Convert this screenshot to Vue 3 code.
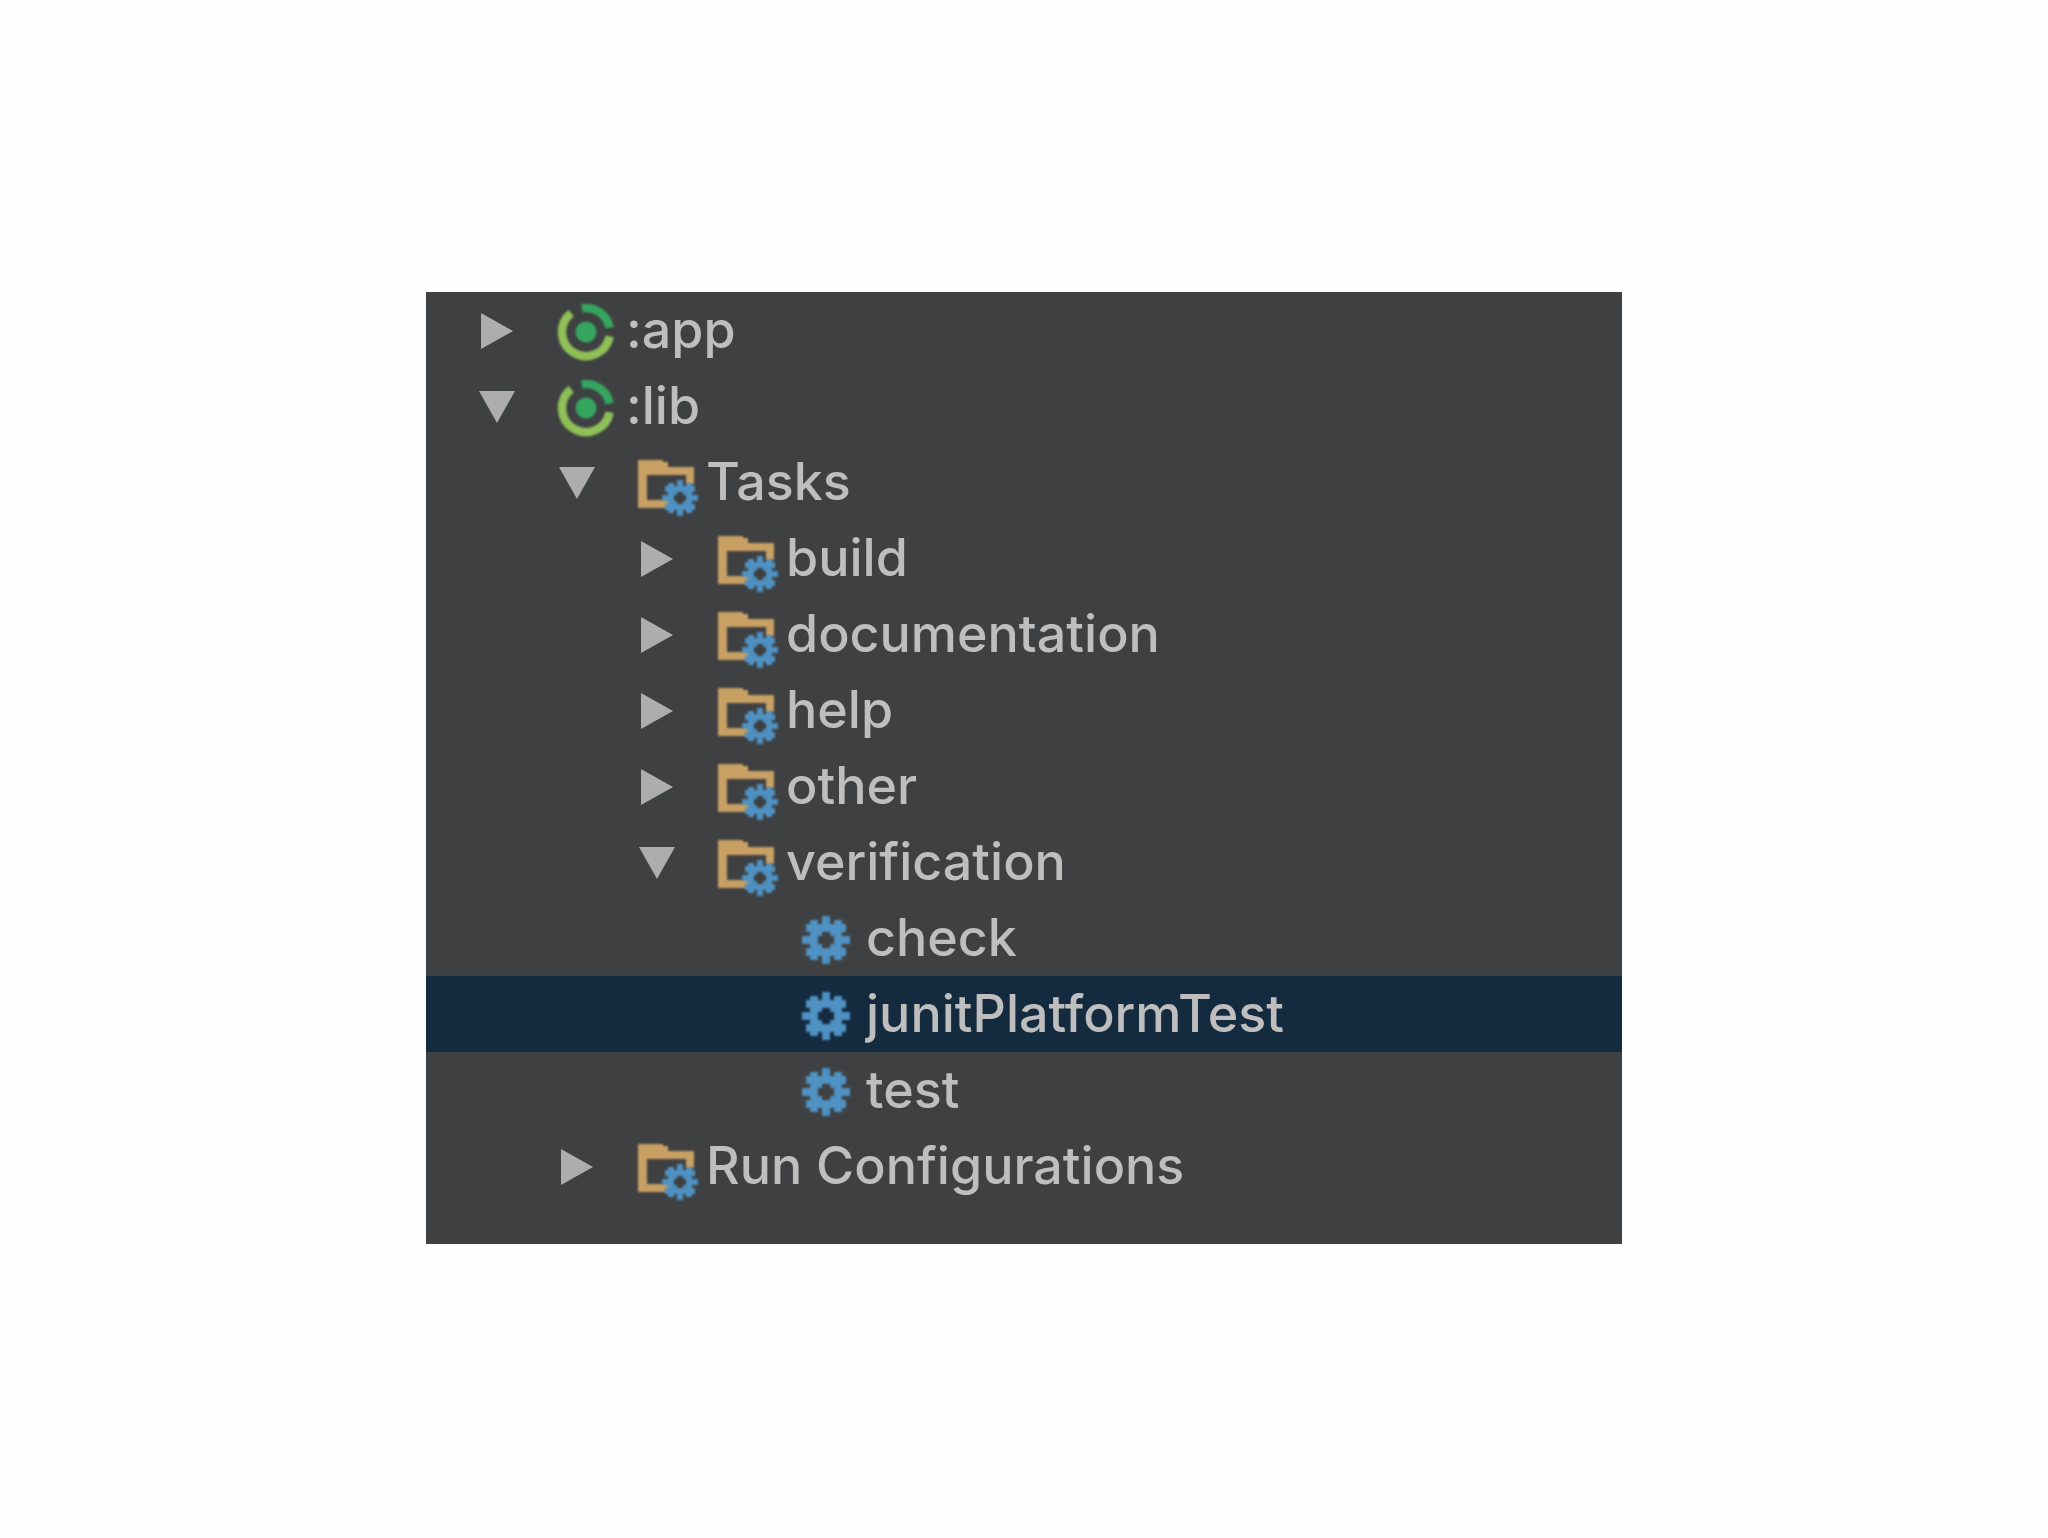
<template>
  <div class="page">
    <ul class="tree">
      <li
        v-for="node in nodes"
        :key="node.label"
        :class="['row', { selected: node.selected }]"
        :style="{ paddingLeft: node.depth * 80 + 'px' }"
      >
        <span class="arrow">
          <svg v-if="node.arrow === 'right'" width="32" height="36" viewBox="0 0 32 36">
            <path d="M0 0L32 18L0 36Z" fill="#adadaf" />
          </svg>
          <svg v-else-if="node.arrow === 'down'" width="36" height="32" viewBox="0 0 36 32">
            <path d="M0 0H36L18 32Z" fill="#adadaf" />
          </svg>
        </span>
        <span class="icon">
          <svg v-if="node.icon === 'module'" width="56" height="56" viewBox="0 0 56 56" fill="none">
            <path d="M23.8 4.4A24 24 0 0 1 51.6 23.8" stroke="#35a55f" stroke-width="8.5" />
            <path d="M51.6 32.2A24 24 0 1 1 13.2 9.1" stroke="#8fc057" stroke-width="8.5" />
            <circle cx="28" cy="28" r="10.5" fill="#35a55f" />
          </svg>
          <svg v-else-if="node.icon === 'folder'" width="60" height="60" viewBox="0 -4 60 60">
            <path
              d="M0 0H25V2H30V7H56V24H48V15H9V40H30V48H0Z"
              fill="#c9a063"
            />
            <path :d="gearPath" fill="#4f91c2" fill-rule="evenodd" transform="translate(24 20) scale(3)" />
          </svg>
          <svg v-else width="56" height="56" viewBox="0 0 56 56">
            <path :d="gearPath" fill="#4f91c2" fill-rule="evenodd" transform="translate(4 4) scale(4)" />
          </svg>
        </span>
        <span class="label">{{ node.label }}</span>
      </li>
    </ul>
  </div>
</template>

<script setup>
const nodes = [
  { label: ':app', depth: 0, arrow: 'right', icon: 'module' },
  { label: ':lib', depth: 0, arrow: 'down', icon: 'module' },
  { label: 'Tasks', depth: 1, arrow: 'down', icon: 'folder' },
  { label: 'build', depth: 2, arrow: 'right', icon: 'folder' },
  { label: 'documentation', depth: 2, arrow: 'right', icon: 'folder' },
  { label: 'help', depth: 2, arrow: 'right', icon: 'folder' },
  { label: 'other', depth: 2, arrow: 'right', icon: 'folder' },
  { label: 'verification', depth: 2, arrow: 'down', icon: 'folder' },
  { label: 'check', depth: 3, icon: 'gear' },
  { label: 'junitPlatformTest', depth: 3, icon: 'gear', selected: true },
  { label: 'test', depth: 3, icon: 'gear' },
  { label: 'Run Configurations', depth: 1, arrow: 'right', icon: 'folder' },
];

// pixel gear, 12x12 cells
const gearCells = [
  '.....XX.....',
  '..XX.XX.XX..',
  '.XXXXXXXXXX.',
  '.XXXXXXXXXX.',
  '..XXX..XXX..',
  'XXXX....XXXX',
  'XXXX....XXXX',
  '..XXX..XXX..',
  '.XXXXXXXXXX.',
  '.XXXXXXXXXX.',
  '..XX.XX.XX..',
  '.....XX.....',
];
const gearPath = gearCells
  .flatMap((line, y) =>
    [...line].map((c, x) => (c === 'X' ? `M${x} ${y}h1v1h-1z` : ''))
  )
  .join('');
</script>

<style scoped>
.page {
  padding: 292px 426px 294px;
}
.tree {
  list-style: none;
  margin: 0;
  padding: 0 0 40px;
  background: #3f4042;
}
.row {
  display: flex;
  align-items: center;
  height: 76px;
  box-sizing: border-box;
}
.row.selected {
  background: #142a3f;
}
.arrow {
  flex: none;
  display: flex;
  align-items: center;
  justify-content: center;
  width: 40px;
  margin: 2px 41px 0 51px;
  filter: blur(0.7px);
}
.icon {
  flex: none;
  width: 56px;
  height: 56px;
  margin: 4px 12px 0 0;
  filter: blur(1px);
}
.icon svg {
  display: block;
  overflow: visible;
}
.label {
  font-family: Inter, "Liberation Sans", sans-serif;
  font-size: 52px;
  font-weight: 500;
  line-height: 76px;
  color: #bebebe;
  white-space: nowrap;
  filter: blur(0.7px);
}
</style>

<style>
body {
  background: #fefefe;
}
</style>
